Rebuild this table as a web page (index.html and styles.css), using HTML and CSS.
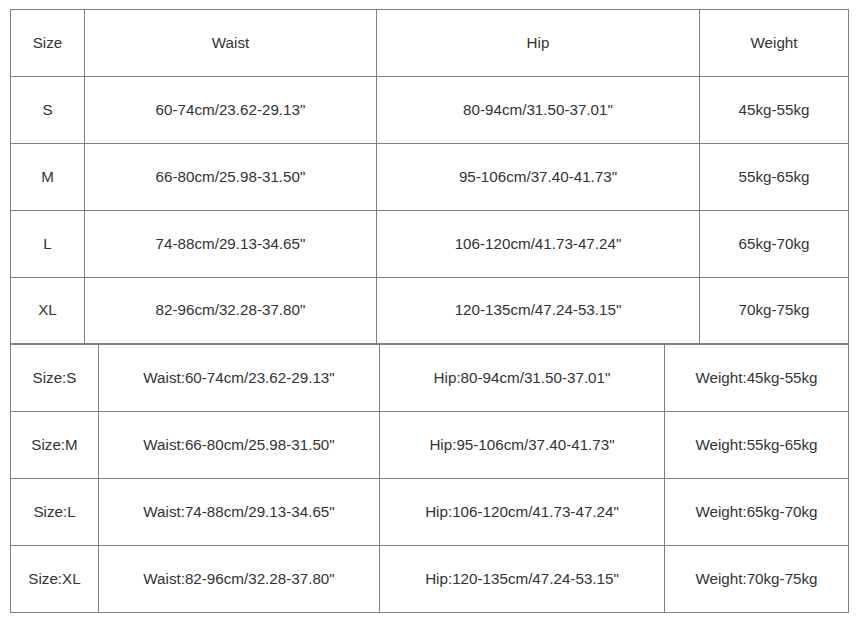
FILE: index.html
```html
<!DOCTYPE html>
<html>
<head>
<meta charset="utf-8">
<link rel="stylesheet" href="styles.css">
</head>
<body>
<div class="wrap">
<table class="chart chart-a">
<colgroup><col class="a1"><col class="a2"><col class="a3"><col class="a4"></colgroup>
<tr class="r1"><td>Size</td><td>Waist</td><td>Hip</td><td>Weight</td></tr>
<tr class="r1"><td>S</td><td>60-74cm/23.62-29.13"</td><td>80-94cm/31.50-37.01"</td><td>45kg-55kg</td></tr>
<tr class="r1"><td>M</td><td>66-80cm/25.98-31.50"</td><td>95-106cm/37.40-41.73"</td><td>55kg-65kg</td></tr>
<tr class="r1"><td>L</td><td>74-88cm/29.13-34.65"</td><td>106-120cm/41.73-47.24"</td><td>65kg-70kg</td></tr>
<tr class="r0"><td>XL</td><td>82-96cm/32.28-37.80"</td><td>120-135cm/47.24-53.15"</td><td>70kg-75kg</td></tr>
</table>
<table class="chart chart-b">
<colgroup><col class="b1"><col class="b2"><col class="b3"><col class="b4"></colgroup>
<tr><td>Size:S</td><td>Waist:60-74cm/23.62-29.13"</td><td>Hip:80-94cm/31.50-37.01"</td><td>Weight:45kg-55kg</td></tr>
<tr><td>Size:M</td><td>Waist:66-80cm/25.98-31.50"</td><td>Hip:95-106cm/37.40-41.73"</td><td>Weight:55kg-65kg</td></tr>
<tr><td>Size:L</td><td>Waist:74-88cm/29.13-34.65"</td><td>Hip:106-120cm/41.73-47.24"</td><td>Weight:65kg-70kg</td></tr>
<tr><td>Size:XL</td><td>Waist:82-96cm/32.28-37.80"</td><td>Hip:120-135cm/47.24-53.15"</td><td>Weight:70kg-75kg</td></tr>
</table>
</div>
</body>
</html>
```
FILE: styles.css
```css
html, body {
  margin: 0;
  padding: 0;
  background: #ffffff;
}
.wrap {
  padding: 9px 0 0 10px;
}
.chart {
  border-collapse: collapse;
  table-layout: fixed;
  width: 838px;
  font-family: "Liberation Sans", Arial, sans-serif;
  font-size: 15.2px;
  color: #333333;
}
.chart td {
  border: 1px solid #808080;
  text-align: center;
  vertical-align: middle;
  padding: 0 0 2px 0;
}
.chart-a tr.r0 { height: 66px; }
.chart-a tr.r1 { height: 67px; }
.chart-b tr { height: 67px; }
.a1 { width: 74px; }
.a2 { width: 292px; }
.a3 { width: 323px; }
.a4 { width: 149px; }
.b1 { width: 88px; }
.b2 { width: 281px; }
.b3 { width: 285px; }
.b4 { width: 184px; }
```
